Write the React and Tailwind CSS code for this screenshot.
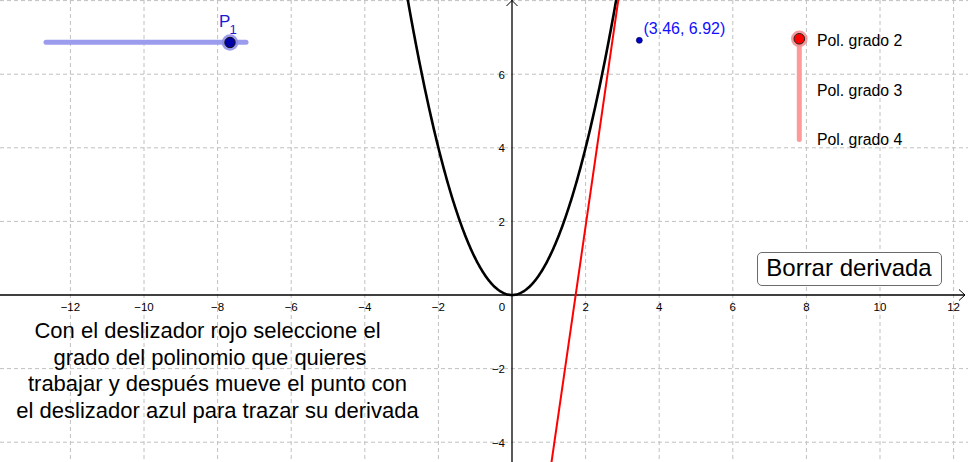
import React from "react";

const OX = 512;
const OY = 295;
const U = 36.8;
const px = (x) => OX + x * U;
const py = (y) => OY - y * U;

function parabola() {
  const pts = [];
  for (let i = 0; i <= 240; i++) {
    const x = -3.0 + (6.0 * i) / 240;
    pts.push(`${i === 0 ? "M" : "L"}${px(x).toFixed(2)},${py(x * x).toFixed(2)}`);
  }
  return pts.join(" ");
}

export default function App() {
  const a = 3.46;
  const m = 2 * a;
  const b = -a * a;
  const lx1 = (8.5 - b) / m;
  const lx2 = (-5 - b) / m;

  const vLines = [];
  for (let k = -14; k <= 14; k += 2) {
    if (k === 0) continue;
    vLines.push(k);
  }
  const hLines = [8, 6, 4, 2, -2, -4];
  const xLabels = [-12, -10, -8, -6, -4, -2, 2, 4, 6, 8, 10, 12];
  const yLabels = [6, 4, 2, -2, -4];

  return (
    <div className="relative w-[968px] h-[462px] bg-white overflow-hidden" style={{ fontFamily: '"Liberation Sans", Arial, sans-serif' }}>
      <svg width="968" height="462" className="absolute inset-0">
        {vLines.map((k) => (
          <line key={"v" + k} x1={px(k)} y1={0} x2={px(k)} y2={462} stroke="#c0c0c0" strokeWidth="1" strokeDasharray="4 3" />
        ))}
        {hLines.map((k) => (
          <line key={"h" + k} x1={0} y1={py(k)} x2={968} y2={py(k)} stroke="#c0c0c0" strokeWidth="1" strokeDasharray="4 3" />
        ))}
        {/* axes */}
        <line x1={0} y1={OY} x2={965} y2={OY} stroke="#000" strokeWidth="1.3" />
        <polyline points={`959,289.5 965,295 959,300.5`} fill="none" stroke="#000" strokeWidth="1" />
        <line x1={OX} y1={0} x2={OX} y2={462} stroke="#000" strokeWidth="1.3" />
        <polyline points={`506.5,6 512,0.5 517.5,6`} fill="none" stroke="#000" strokeWidth="1" />
        {xLabels.map((k) => (
          <text key={"xl" + k} x={px(k)} y={311} fontSize="11.5" textAnchor="middle" fill="#000" fontFamily='"Liberation Sans", Arial, sans-serif'>
            {k < 0 ? "\u2212" + Math.abs(k) : k}
          </text>
        ))}
        <text x={502} y={311} fontSize="11.5" textAnchor="middle" fill="#000" fontFamily='"Liberation Sans", Arial, sans-serif'>0</text>
        {yLabels.map((k) => (
          <text key={"yl" + k} x={505} y={py(k) + 4.5} fontSize="11.5" textAnchor="end" fill="#000" fontFamily='"Liberation Sans", Arial, sans-serif'>
            {k < 0 ? "\u2212" + Math.abs(k) : k}
          </text>
        ))}
        {/* parabola */}
        <path d={parabola()} fill="none" stroke="#000" strokeWidth="2.6" strokeLinejoin="round" />
        {/* tangent */}
        <line x1={px(lx1)} y1={py(8.5)} x2={px(lx2)} y2={py(-5)} stroke="#ff0000" strokeWidth="2" />
        {/* blue slider */}
        <line x1={46} y1={42.3} x2={246} y2={42.3} stroke="#9c9cee" strokeWidth="5" strokeLinecap="round" />
        <circle cx={230} cy={42.5} r={8.3} fill="#8a8ae8" opacity="0.85" />
        <circle cx={230} cy={42.5} r={5.2} fill="#0000a8" stroke="#111" strokeWidth="1" />
        <text x={219} y={27} fontSize="17" fill="#1a1ad0" fontFamily='"Liberation Sans", Arial, sans-serif'>P</text>
        <text x={229.5} y={33.5} fontSize="13" fill="#1a1ad0" fontFamily='"Liberation Sans", Arial, sans-serif'>1</text>
        {/* red slider */}
        <line x1={799.3} y1={40} x2={799.3} y2={139.5} stroke="#ff9a9a" strokeWidth="5" strokeLinecap="round" />
        <circle cx={799.3} cy={38.8} r={8.3} fill="#f49090" opacity="0.9" />
        <circle cx={799.3} cy={38.8} r={5.3} fill="#ff0000" stroke="#222" strokeWidth="1" />
        {/* point */}
        <circle cx={px(3.46)} cy={py(6.92)} r={3} fill="#0000cc" stroke="#000033" strokeWidth="0.6" />
        <text x={643.5} y={34} fontSize="16" fill="#1010ff" fontFamily='"Liberation Sans", Arial, sans-serif'>(3.46, 6.92)</text>
        {/* slider labels */}
        <text x={817} y={46} fontSize="15.8" fill="#000" fontFamily='"Liberation Sans", Arial, sans-serif'>Pol. grado 2</text>
        <text x={817} y={95.5} fontSize="15.8" fill="#000" fontFamily='"Liberation Sans", Arial, sans-serif'>Pol. grado 3</text>
        <text x={817} y={144.5} fontSize="15.8" fill="#000" fontFamily='"Liberation Sans", Arial, sans-serif'>Pol. grado 4</text>
      </svg>

      <button className="absolute left-[756.5px] top-[251.5px] w-[185px] h-[34px] rounded-[5px] border border-[#6b6b6b] bg-white text-[24px] leading-none text-black flex items-center justify-center pb-[1px]" style={{ fontFamily: '"Liberation Sans", Arial, sans-serif' }}>
        Borrar derivada
      </button>

      <div className="absolute left-0 top-[318px] w-[435px] flex flex-col items-center text-[22px] leading-[26.6px] text-black">
        <div className="pr-[20px]">Con el deslizador rojo seleccione el</div>
        <div className="pr-[15px]">grado del polinomio que quieres</div>
        <div>trabajar y después mueve el punto con</div>
        <div>el deslizador azul para trazar su derivada</div>
      </div>
    </div>
  );
}
